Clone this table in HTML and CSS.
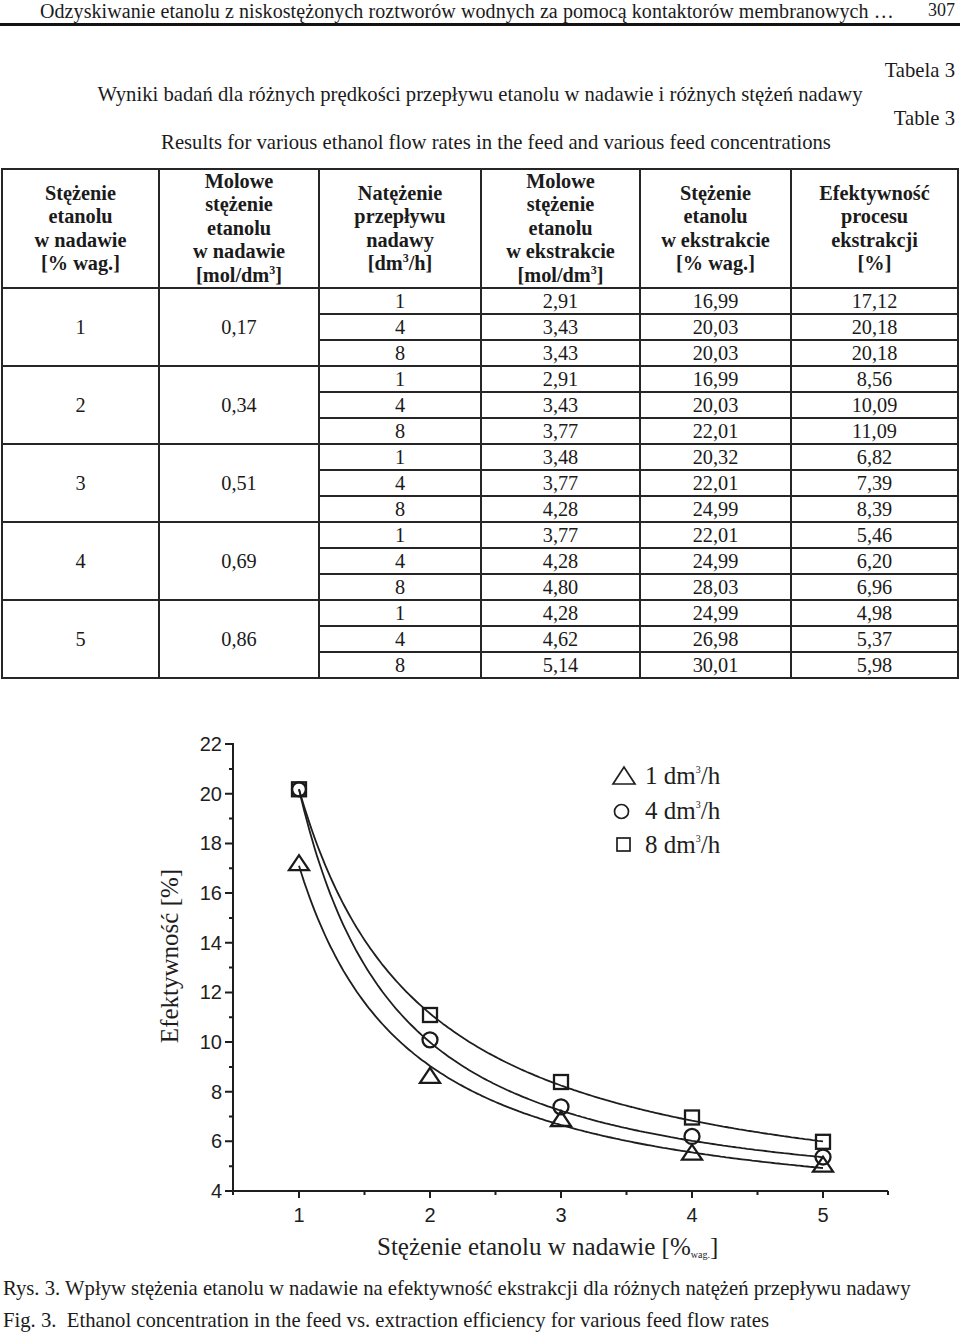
FILE: index.html
```html
<!DOCTYPE html>
<html lang="pl">
<head>
<meta charset="utf-8">
<title>Tabela 3</title>
<link rel="stylesheet" href="styles.css">
</head>
<body>
<header class="running-head">
  <span class="rh-title">Odzyskiwanie etanolu z niskostężonych roztworów wodnych za pomocą kontaktorów membranowych …</span>
  <span class="rh-page">307</span>
</header>

<div class="table-title">
  <p class="t-label">Tabela 3</p>
  <p class="t-pl">Wyniki badań dla różnych prędkości przepływu etanolu w nadawie i różnych stężeń nadawy</p>
  <p class="t-label">Table 3</p>
  <p class="t-en">Results for various ethanol flow rates in the feed and various feed concentrations</p>
</div>

<table class="data">
  <colgroup>
    <col class="c1"><col class="c2"><col class="c3"><col class="c4"><col class="c5"><col class="c6">
  </colgroup>
  <thead>
    <tr>
      <th>Stężenie<br>etanolu<br>w nadawie<br>[% wag.]</th>
      <th>Molowe<br>stężenie<br>etanolu<br>w nadawie<br>[mol/dm<sup>3</sup>]</th>
      <th>Natężenie<br>przepływu<br>nadawy<br>[dm<sup>3</sup>/h]</th>
      <th>Molowe<br>stężenie<br>etanolu<br>w ekstrakcie<br>[mol/dm<sup>3</sup>]</th>
      <th>Stężenie<br>etanolu<br>w ekstrakcie<br>[% wag.]</th>
      <th>Efektywność<br>procesu<br>ekstrakcji<br>[%]</th>
    </tr>
  </thead>
  <tbody>
    <tr><td rowspan="3">1</td><td rowspan="3">0,17</td><td>1</td><td>2,91</td><td>16,99</td><td>17,12</td></tr>
    <tr><td>4</td><td>3,43</td><td>20,03</td><td>20,18</td></tr>
    <tr><td>8</td><td>3,43</td><td>20,03</td><td>20,18</td></tr>
    <tr><td rowspan="3">2</td><td rowspan="3">0,34</td><td>1</td><td>2,91</td><td>16,99</td><td>8,56</td></tr>
    <tr><td>4</td><td>3,43</td><td>20,03</td><td>10,09</td></tr>
    <tr><td>8</td><td>3,77</td><td>22,01</td><td>11,09</td></tr>
    <tr><td rowspan="3">3</td><td rowspan="3">0,51</td><td>1</td><td>3,48</td><td>20,32</td><td>6,82</td></tr>
    <tr><td>4</td><td>3,77</td><td>22,01</td><td>7,39</td></tr>
    <tr><td>8</td><td>4,28</td><td>24,99</td><td>8,39</td></tr>
    <tr><td rowspan="3">4</td><td rowspan="3">0,69</td><td>1</td><td>3,77</td><td>22,01</td><td>5,46</td></tr>
    <tr><td>4</td><td>4,28</td><td>24,99</td><td>6,20</td></tr>
    <tr><td>8</td><td>4,80</td><td>28,03</td><td>6,96</td></tr>
    <tr><td rowspan="3">5</td><td rowspan="3">0,86</td><td>1</td><td>4,28</td><td>24,99</td><td>4,98</td></tr>
    <tr><td>4</td><td>4,62</td><td>26,98</td><td>5,37</td></tr>
    <tr><td>8</td><td>5,14</td><td>30,01</td><td>5,98</td></tr>
  </tbody>
</table>

<svg class="chart" viewBox="0 710 960 560" width="960" height="560" xmlns="http://www.w3.org/2000/svg">
  <g class="axis">
    <path d="M233 744 V1192 H888"/>
    <path d="M225 1192H233 M225 1142.3H233 M225 1092.7H233 M225 1043H233 M225 993.4H233 M225 943.7H233 M225 894H233 M225 844.4H233 M225 794.7H233 M225 745H233"/>
    <path d="M229 1167.2H233 M229 1117.5H233 M229 1067.9H233 M229 1018.2H233 M229 968.5H233 M229 918.9H233 M229 869.2H233 M229 819.6H233 M229 769.9H233"/>
    <path d="M299 1192V1199 M430 1192V1199 M561 1192V1199 M692 1192V1199 M823 1192V1199"/>
    <path d="M233 1192V1196 M364.5 1192V1196 M495.5 1192V1196 M626.5 1192V1196 M757.5 1192V1196 M888 1192V1196"/>
  </g>
  <g class="ticklabels ylab">
    <text x="222" y="1199">4</text>
    <text x="222" y="1149.3">6</text>
    <text x="222" y="1099.7">8</text>
    <text x="222" y="1050">10</text>
    <text x="222" y="1000.4">12</text>
    <text x="222" y="950.7">14</text>
    <text x="222" y="901">16</text>
    <text x="222" y="851.4">18</text>
    <text x="222" y="801.7">20</text>
    <text x="222" y="752">22</text>
  </g>
  <g class="ticklabels xlab">
    <text x="299" y="1223">1</text>
    <text x="430" y="1223">2</text>
    <text x="561" y="1223">3</text>
    <text x="692" y="1223">4</text>
    <text x="823" y="1223">5</text>
  </g>
  <text class="axis-title" transform="translate(178 957) rotate(-90)" text-anchor="middle">Efektywność [%]</text>
  <text class="axis-title" x="377" y="1256">Stężenie etanolu w nadawie <tspan>[%</tspan><tspan class="sub" dy="3">wag.</tspan><tspan dy="-3">]</tspan></text>

  <g class="curves">
    <path data-a="2.88" data-b="17.3" data-c="1.065" d="M299,790.3 L305.6,812.1 312.1,831.7 325.2,866.1 344.9,907.7 364.5,940.9 397.3,983.1 430,1014.5 462.8,1038.7 495.5,1057.9 561,1086.5 626.5,1106.7 692,1121.7 757.5,1133.3 823,1142.4"/>
    <path data-a="3.49" data-b="16.69" data-c="1.36" d="M299,790.3 L305.6,816.8 312.1,840.7 325.2,881.2 344.9,929.1 364.5,965.9 397.3,1011 430,1043.2 462.8,1067.1 495.5,1085.5 561,1111.7 626.5,1129.2 692,1141.7 757.5,1151.1 823,1158.2"/>
    <path data-a="2.9" data-b="14.2" data-c="1.21" d="M299,866.7 L305.6,886.8 312.1,905.2 325.2,936.5 344.9,974.1 364.5,1003.5 397.3,1040.2 430,1066.9 462.8,1087.1 495.5,1103 561,1126 626.5,1141.9 692,1153.4 757.5,1162.2 823,1169"/>
  </g>

  <g class="markers">
    <rect x="292" y="783.3" width="14" height="14"/>
    <rect x="423" y="1009" width="14" height="14"/>
    <rect x="554" y="1076" width="14" height="14"/>
    <rect x="685" y="1111.5" width="14" height="14"/>
    <rect x="816" y="1135.8" width="14" height="14"/>
    <circle cx="299" cy="790.3" r="7"/>
    <circle cx="430" cy="1040.8" r="7.5"/>
    <circle cx="561" cy="1107.8" r="7.5"/>
    <circle cx="692" cy="1137.4" r="7.5"/>
    <circle cx="823" cy="1158" r="7.5"/>
    <path d="M289 871.2H309L299 856.2Z"/>
    <path d="M420 1083.8H440L430 1068.8Z"/>
    <path d="M551 1127H571L561 1112Z"/>
    <path d="M682 1160.7H702L692 1145.7Z"/>
    <path d="M813 1172.7H833L823 1157.7Z"/>
  </g>

  <g class="legend">
    <path class="lg-mark" d="M613 785H635L624 768Z"/>
    <circle class="lg-mark" cx="621.5" cy="812.5" r="7"/>
    <rect class="lg-mark" x="617" y="839" width="13" height="13"/>
    <text x="645" y="785">1 dm<tspan class="sup" dy="-11">3</tspan><tspan dy="11">/h</tspan></text>
    <text x="645" y="820">4 dm<tspan class="sup" dy="-11">3</tspan><tspan dy="11">/h</tspan></text>
    <text x="645" y="854">8 dm<tspan class="sup" dy="-11">3</tspan><tspan dy="11">/h</tspan></text>
  </g>
</svg>

<div class="caption">
  <p>Rys. 3. Wpływ stężenia etanolu w nadawie na efektywność ekstrakcji dla różnych natężeń przepływu nadawy</p>
  <p>Fig. 3.&nbsp; Ethanol concentration in the feed vs. extraction efficiency for various feed flow rates</p>
</div>
<script src="script.js"></script>
</body>
</html>
```

FILE: styles.css
```css
html, body {
  margin: 0;
  padding: 0;
  background: #ffffff;
}

body {
  width: 960px;
  font-family: "Liberation Serif", "Times New Roman", serif;
  font-size: 20px;
  color: #1b1b1b;
}

p {
  margin: 0;
}

/* running head */
.running-head {
  display: flex;
  justify-content: space-between;
  align-items: center;
  height: 23px;
  line-height: 23px;
  padding: 0 5px 0 40px;
  border-bottom: 3px solid #141414;
  font-size: 20px;
  letter-spacing: 0.08px;
}

.rh-page {
  font-size: 18px;
  margin-bottom: 3px;
  letter-spacing: 0;
}

/* table title */
.table-title {
  margin-top: 32px;
  line-height: 24px;
  font-size: 20.7px;
}

.t-label {
  text-align: right;
  padding-right: 5px;
}

.t-pl {
  text-align: center;
}

.t-en {
  text-align: center;
  padding-left: 32px;
}

/* data table */
.data {
  margin: 14px 0 0 1px;
  width: 956px;
  border-collapse: collapse;
  table-layout: fixed;
  font-size: 20.3px;
}

.c1 { width: 157px; }
.c2 { width: 160px; }
.c3 { width: 162px; }
.c4 { width: 159px; }
.c5 { width: 151px; }
.c6 { width: 167px; }

.data th,
.data td {
  border: 2px solid #262626;
  padding: 0;
  text-align: center;
  vertical-align: middle;
}

.data th {
  height: 112px;
  font-weight: bold;
  line-height: 23.4px;
}

.data td {
  height: 24px;
  line-height: 24px;
}

.data sup {
  font-size: 12px;
  line-height: 0;
  vertical-align: 8px;
}

/* chart */
.chart {
  display: block;
  margin-top: 30px;
}

.axis path {
  fill: none;
  stroke: #1e1e1e;
  stroke-width: 2;
}

.ticklabels text {
  font-family: "Liberation Sans", Arial, sans-serif;
  font-size: 20px;
  fill: #1e1e1e;
}

.ylab text {
  text-anchor: end;
}

.xlab text {
  text-anchor: middle;
}

.axis-title {
  font-family: "Liberation Serif", "Times New Roman", serif;
  font-size: 25px;
  fill: #1e1e1e;
}

.axis-title .sub {
  font-size: 10px;
}

.curves path {
  fill: none;
  stroke: #1e1e1e;
  stroke-width: 1.8;
  stroke-linejoin: round;
}

.markers rect,
.markers circle,
.markers path {
  fill: none;
  stroke: #1a1a1a;
  stroke-width: 2.3;
}

.legend .lg-mark {
  fill: none;
  stroke: #1e1e1e;
  stroke-width: 1.7;
}

.legend text {
  font-family: "Liberation Serif", "Times New Roman", serif;
  font-size: 25px;
  fill: #1e1e1e;
}

.legend .sup {
  font-size: 10px;
}

/* caption */
.caption {
  margin-top: 3px;
  padding-left: 3px;
  line-height: 32px;
  font-size: 20.7px;
}
```

FILE: script.js
```js
// Draw the fitted curves y = a + b * x^(-c) smoothly from x = 1 to x = 5.
(function () {
  var px = function (x) { return 299 + (x - 1) * 131; };
  var py = function (v) { return 1192 - (v - 4) * 24.83; };
  var paths = document.querySelectorAll('.curves path');
  Array.prototype.forEach.call(paths, function (p) {
    var a = parseFloat(p.getAttribute('data-a'));
    var b = parseFloat(p.getAttribute('data-b'));
    var c = parseFloat(p.getAttribute('data-c'));
    var pts = [];
    for (var i = 0; i <= 200; i++) {
      var x = 1 + i * 0.02;
      var v = a + b * Math.pow(x, -c);
      pts.push(px(x).toFixed(1) + ',' + py(v).toFixed(1));
    }
    p.setAttribute('d', 'M' + pts.join(' L'));
  });
})();
```
